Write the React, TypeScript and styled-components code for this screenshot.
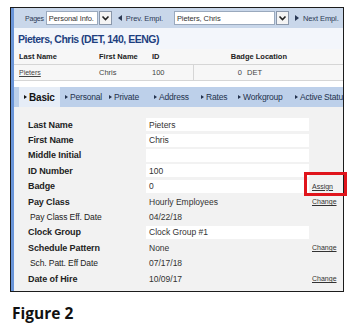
import React from 'react'
import styled, { createGlobalStyle } from 'styled-components'

const Global = createGlobalStyle`
  html, body { margin: 0; padding: 0; background: #fff; }
  body { font-family: "Liberation Sans", Arial, sans-serif; color: #222; }
`

const Page = styled.div`
  width: 351px;
  height: 330px;
  overflow: hidden;
  padding: 7px 0 0 10px;
  box-sizing: border-box;
`

const Frame = styled.div`
  width: 334px;
  height: 285px;
  box-sizing: border-box;
  border: 1px solid #1c1c1c;
  display: flex;
  flex-direction: column;
  position: relative;
  &:before {
    content: "";
    position: absolute;
    left: 0;
    top: 0;
    bottom: 0;
    width: 3px;
    background: #6a95d8;
    z-index: 2;
  }
`

const Toolbar = styled.div`
  height: 20px;
  background: #c9d7ea;
  display: flex;
  align-items: center;
  padding-left: 14px;
  font-size: 7.5px;
  color: #2c3a55;
  flex-shrink: 0;
  white-space: nowrap;
  overflow: hidden;
`

const Label = styled.span`
  margin-right: 2px;
  font-size: 7px;
  letter-spacing: -0.2px;
`

const Select = styled.div<{ w: number; ml?: number }>`
  width: ${p => p.w}px;
  margin-left: ${p => p.ml ?? 0}px;
  flex-shrink: 0;
  height: 14px;
  background: #fff;
  border: 1px solid #9aa9bd;
  box-sizing: border-box;
  display: flex;
  align-items: center;
  font-size: 7.5px;
  letter-spacing: -0.1px;
  color: #333;
  padding-left: 2px;
  overflow: hidden;
  white-space: nowrap;
`

const DropBtn = styled.div`
  width: 13px;
  height: 14px;
  flex-shrink: 0;
  border: 1px solid #8a97aa;
  box-sizing: border-box;
  background: #f4f4f4;
  display: flex;
  align-items: center;
  justify-content: center;
  margin-left: 1px;
`

const NavLink = styled.span<{ ml: number }>`
  margin-left: ${p => p.ml}px;
  display: flex;
  align-items: center;
  gap: 4px;
  white-space: nowrap;
  font-size: 7.5px;
  letter-spacing: -0.1px;
`

const Header = styled.div`
  height: 21px;
  background: #f3f6fb;
  display: flex;
  align-items: center;
  padding-left: 7px;
  font-weight: bold;
  font-size: 10.5px;
  letter-spacing: -0.5px;
  color: #1e3f80;
  flex-shrink: 0;
`

const Grid = styled.div`
  background: #f7f7f7;
  display: grid;
  grid-template-columns: 80px 53px 50px 93px 1fr;
  font-size: 7.5px;
  flex-shrink: 0;
`

const HeadCell = styled.div<{ right?: boolean }>`
  height: 15px;
  display: flex;
  align-items: center;
  justify-content: ${p => (p.right ? 'flex-end' : 'flex-start')};
  font-weight: bold;
  color: #222;
  padding-left: 8px;
  border-bottom: 1px solid #d6d6d6;
`

const Cell = styled.div<{ split?: boolean; link?: boolean }>`
  height: 15px;
  display: flex;
  align-items: center;
  padding-left: 8px;
  color: #444;
  border-bottom: 1px solid #d6d6d6;
  border-right: ${p => (p.split ? '1px solid #d6d6d6' : 'none')};
  text-decoration: ${p => (p.link ? 'underline' : 'none')};
  font-size: ${p => (p.link ? '7px' : '7.5px')};
`

const Tabs = styled.div`
  height: 20px;
  margin-top: 6px;
  background: #bdd0ea;
  display: flex;
  align-items: stretch;
  padding-left: 8px;
  color: #23324d;
  flex-shrink: 0;
  white-space: nowrap;
  overflow: hidden;
  letter-spacing: -0.2px;
`

const Tab = styled.div<{ active?: boolean; w: number }>`
  width: ${p => p.w}px;
  box-sizing: border-box;
  flex-shrink: 0;
  display: flex;
  align-items: center;
  padding-left: 5px;
  background: ${p => (p.active ? '#e6edf7' : 'transparent')};
  font-weight: ${p => (p.active ? 'bold' : 'normal')};
  font-size: ${p => (p.active ? '10px' : '8.5px')};
  color: ${p => (p.active ? '#111' : '#23324d')};
  &:before {
    content: "";
    border-left: 3px solid currentColor;
    border-top: 2.5px solid transparent;
    border-bottom: 2.5px solid transparent;
    margin-right: 2px;
  }
`

const Body = styled.div`
  flex: 1;
  background: #f2f2f2;
  padding: 10px 0 0 17px;
  display: flex;
  flex-direction: column;
`

const Row = styled.div`
  display: grid;
  grid-template-columns: 118px 163px 1fr;
  height: 15.4px;
  align-items: center;
`

const FieldLabel = styled.div<{ sub?: boolean }>`
  font-size: ${p => (p.sub ? '8.5px' : '9px')};
  font-weight: ${p => (p.sub ? 'normal' : 'bold')};
  padding-left: ${p => (p.sub ? '2px' : '0')};
  color: #222;
  white-space: nowrap;
  letter-spacing: -0.1px;
`

const Value = styled.div<{ boxed?: boolean }>`
  height: 13px;
  display: flex;
  align-items: center;
  padding-left: 3px;
  font-size: 8.5px;
  color: #333;
  background: ${p => (p.boxed ? '#fff' : 'transparent')};
  white-space: nowrap;
`

const ActionCell = styled.div`
  display: flex;
  align-items: center;
  padding-left: 3px;
  position: relative;
`

const Action = styled.span`
  font-size: 7px;
  text-decoration: underline;
  color: #333;
`

const Highlight = styled.div`
  position: absolute;
  left: -5px;
  top: -11px;
  width: 43px;
  height: 24px;
  box-sizing: border-box;
  border: 3px solid #e0151c;
  z-index: 3;
`

const Caption = styled.div`
  margin-top: 10px;
  margin-left: 2px;
  font-family: "Open Sans", "Liberation Sans", sans-serif;
  font-weight: bold;
  font-size: 15.5px;
  color: #111;
`

const Chevron = () => (
  <svg width="9" height="8" viewBox="0 0 9 8">
    <path d="M1.5 2.5 L4.5 5.5 L7.5 2.5" fill="none" stroke="#222" strokeWidth="1.6" />
  </svg>
)

const Tri = ({ left }: { left?: boolean }) => (
  <svg width="4" height="6" viewBox="0 0 4 6">
    <path d={left ? 'M4 0 L0 3 L4 6 Z' : 'M0 0 L4 3 L0 6 Z'} fill="#2c3a55" />
  </svg>
)

const fields = [
  { label: 'Last Name', value: 'Pieters', boxed: true },
  { label: 'First Name', value: 'Chris', boxed: true },
  { label: 'Middle Initial', value: '', boxed: true },
  { label: 'ID Number', value: '100', boxed: true },
  { label: 'Badge', value: '0', boxed: true, action: 'Assign', highlight: true },
  { label: 'Pay Class', value: 'Hourly Employees', action: 'Change' },
  { label: 'Pay Class Eff. Date', value: '04/22/18', sub: true },
  { label: 'Clock Group', value: 'Clock Group #1', boxed: true },
  { label: 'Schedule Pattern', value: 'None', action: 'Change' },
  { label: 'Sch. Patt. Eff Date', value: '07/17/18', sub: true },
  { label: 'Date of Hire', value: '10/09/17', action: 'Change' },
]

const tabs = [
  { name: 'Basic', w: 41, active: true },
  { name: 'Personal', w: 44 },
  { name: 'Private', w: 45 },
  { name: 'Address', w: 47 },
  { name: 'Rates', w: 37 },
  { name: 'Workgroup', w: 57 },
  { name: 'Active Status', w: 70 },
]

export default function App() {
  return (
    <Page>
      <Global />
      <Frame>
        <Toolbar>
          <Label>Pages</Label>
          <Select w={52}>Personal Info.</Select>
          <DropBtn><Chevron /></DropBtn>
          <NavLink ml={6}><Tri left />Prev. Empl.</NavLink>
          <Select w={101} ml={11}>Pieters, Chris</Select>
          <DropBtn><Chevron /></DropBtn>
          <NavLink ml={6}><Tri />Next Empl.</NavLink>
        </Toolbar>
        <Header>Pieters, Chris (DET, 140, EENG)</Header>
        <Grid>
          <HeadCell>Last Name</HeadCell>
          <HeadCell>First Name</HeadCell>
          <HeadCell>ID</HeadCell>
          <HeadCell right>Badge Location</HeadCell>
          <HeadCell />
          <Cell link>Pieters</Cell>
          <Cell>Chris</Cell>
          <Cell split>100</Cell>
          <Cell style={{ justifyContent: 'flex-end', paddingRight: 0 }}>
            0<span style={{ marginLeft: 5, width: 40 }}>DET</span>
          </Cell>
          <Cell />
        </Grid>
        <Tabs>
          {tabs.map(t => (
            <Tab key={t.name} w={t.w} active={t.active}>{t.name}</Tab>
          ))}
        </Tabs>
        <Body>
          {fields.map(f => (
            <Row key={f.label}>
              <FieldLabel sub={f.sub}>{f.label}</FieldLabel>
              <Value boxed={f.boxed}>{f.value}</Value>
              <ActionCell>
                {f.action && <Action>{f.action}</Action>}
                {f.highlight && <Highlight />}
              </ActionCell>
            </Row>
          ))}
        </Body>
      </Frame>
      <Caption>Figure 2</Caption>
    </Page>
  )
}
